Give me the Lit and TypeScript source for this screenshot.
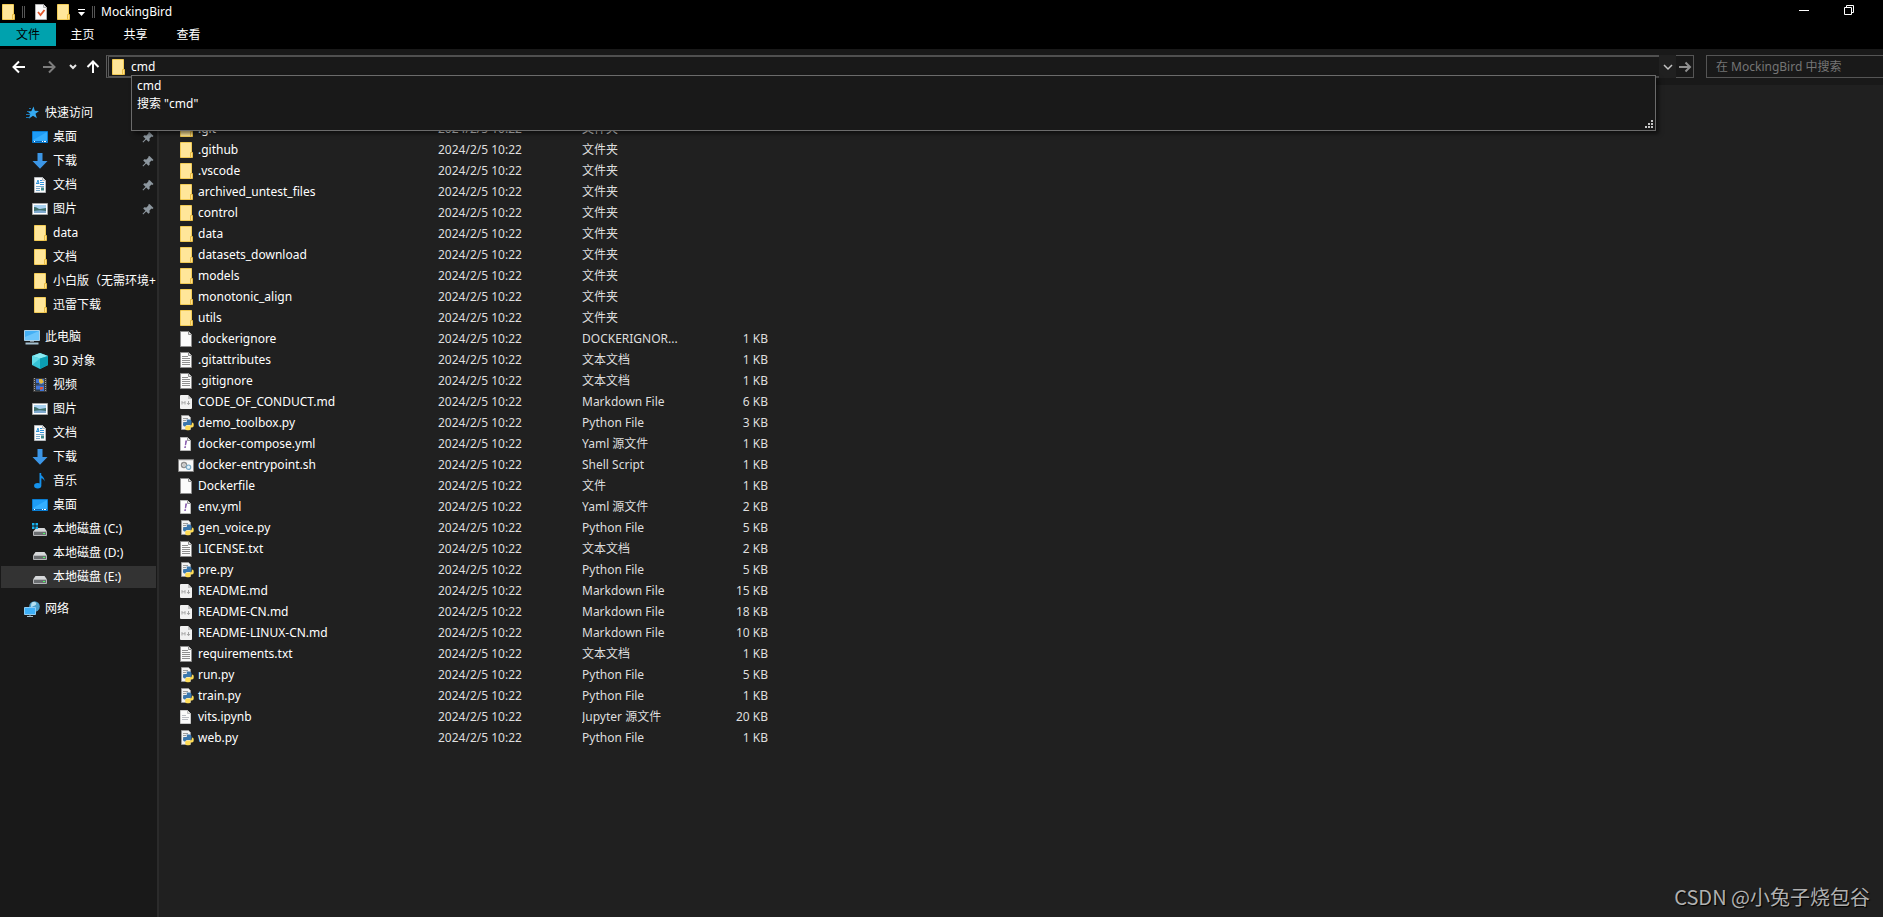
import { LitElement, html, css, svg, type TemplateResult } from "lit";
import { customElement, property } from "lit/decorators.js";

const page = (stroke = "#8e8e8e") => svg`
  <path d="M2.5 .5h8l3 3v12h-11z" fill="#fbfbfb" stroke="${stroke}"/>
  <path d="M10.5 .5v3h3" fill="#e6e6e6" stroke="${stroke}"/>`;

const ICONS: Record<string, unknown> = {
  folder: svg`
    <path d="M2.5 .5h11v15h-11z" fill="#ffe699" stroke="#f2cb55"/>
    <path d="M12.5 10.5h2v5h-2z" fill="#ffe18a" stroke="#e9bd45"/>`,
  file: page(),
  text: svg`${page()}<path d="M4 4.5h6M4 6.5h8M4 8.5h8M4 10.5h8M4 12.5h8" stroke="#8f8f8f"/>`,
  notebook: svg`
    <path d="M2.5 1.5h7l3 3v10h-10z" fill="#fafafa" stroke="#c9c9c9"/>
    <path d="M9.5 1.5v3h3" fill="#ddd" stroke="#bbb"/>
    <path d="M4 6.5h4M4 8.5h7M4 10.5h6" stroke="#b9bcc2"/>`,
  markdown: svg`
    <path d="M3 1h7l4 4v9a1 1 0 0 1-1 1h-10a1 1 0 0 1-1-1v-12a1 1 0 0 1 1-1z" fill="#f1f1f1"/>
    <path d="M10 1v4h4z" fill="#c4c4c4"/>
    <path d="M4 10.5v-3l1.500 1.700 1.500-1.700v3M10.500 7v3.500M9 9l1.500 1.700 1.500-1.700" fill="none" stroke="#a3a3a3"/>`,
  yaml: svg`
    <path d="M2.500 1.500h7l3 3v10h-10z" fill="#fff" stroke="#b8b8b8"/>
    <path d="M9.500 1.500v3h3" fill="#ddd" stroke="#999"/>
    <path d="M7.300 4.500h1.900l-1.100 4.800h-1.300zM6.500 10.300h1.600l-.3 1.700h-1.600z" fill="#8b5fb0"/>`,
  python: svg`
    <path d="M3.500 .5h7l2 2v12h-9z" fill="#f2f2f2" stroke="#9a9a9a"/>
    <path d="M5 3.500h5M5 5.500h3M5 7.500h2M5 9.500h1" stroke="#9c9c9c"/>
    <path d="M8.500 4.500h3a2 2 0 0 1 2 2v2a1.500 1.500 0 0 1-1.500 1.500h-3a1.500 1.500 0 0 0-1.500 1.500h-.8a1.800 1.800 0 0 1-1.700-1.800v-1a1.800 1.800 0 0 1 1.800-1.800h2v-.8z" fill="#3b77ad"/>
    <path d="M14.200 7.500a1.800 1.800 0 0 1 1.500 1.800v1.500a1.800 1.800 0 0 1-1.800 1.800h-1.500v1.200a1.500 1.500 0 0 1-1.500 1.500h-2a1.700 1.700 0 0 1-1.700-1.700v-1.300a1.700 1.700 0 0 1 1.700-1.700h3a1.900 1.900 0 0 0 1.900-1.900z" fill="#ffdd57"/>`,
  shell: svg`
    <path d="M.5 2.500h15v12h-15z" fill="#f7f7f7" stroke="#858585"/>
    <path d="M1 3.500h14" stroke="#dcdcdc"/>
    <circle cx="6" cy="8" r="2.500" fill="none" stroke="#8d8d8d" stroke-width="1.400"/>
    <circle cx="6" cy="8" r=".7" fill="#777"/>
    <circle cx="10.500" cy="10.200" r="2.200" fill="#e2f2fb" stroke="#78a9c8" stroke-width="1.200"/>`,
  star: svg`
    <path d="M9.500 1.500l1.300 4.300 4.200.2-3.500 2.700 1.400 4.600-3.900-2.600-4.200 3 1.500-4.800-3-2.700h4z" fill="#35a9f0"/>
    <path d="M5 3.500h2M3 6.500h2M2 9.500h4M2 12.500h3" stroke="#1979b8"/>`,
  desktop: svg`
    <path d="M.5 2.500h15v11h-15z" fill="#1e9cf7" stroke="#0a7dd2"/>
    <path d="M1 12v-1l14-8v9z" fill="#34aeff"/>
    <path d="M1 12.500h14" stroke="#0c68b8"/>
    <path d="M2 12.500h1M10 12.500h1M12 12.500h2" stroke="#fff"/>`,
  download: svg`<path d="M5.500 0h5v8h5l-7.500 7.700-7.500-7.700h5z" fill="#3c96e6"/>`,
  document: svg`
    ${page("#b4b8bc")}
    <path d="M4 6.500h3M8 3.500h2M8 5.500h4M8 7.500h4" stroke="#2f93d8"/>
    <path d="M4.500 7l1.500-4 1 4" fill="none" stroke="#2f93d8"/>
    <path d="M4 9.500h8M4 11.500h4M4 13.500h4" stroke="#77a8cc"/>
    <path d="M9 10.500h3v3h-3z" fill="#3f8b8e"/>`,
  picture: svg`
    <path d="M.5 2.500h15v11h-15z" fill="#fff" stroke="#a2a2a2"/>
    <path d="M2 4h12v8h-12z" fill="#a8d1f0"/>
    <path d="M2 6c3 0 4 2 6 2s4-1 6-1v5h-12z" fill="#3d6f6b"/>
    <path d="M2 10c4-1 8-1 12 0v2h-12z" fill="#7fa9cf"/>`,
  computer: svg`
    <path d="M.5 1.500h15v10h-15z" fill="#45b0f5" stroke="#a9cfe8"/>
    <path d="M1 11v-3l14-6v9z" fill="#6cc5fb"/>
    <path d="M6 12.500h4" stroke="#7f8b93"/>
    <path d="M1.500 14.500h13" stroke="#a7c2d2" stroke-width="2"/>`,
  cube: svg`
    <path d="M8 0l8 3v9l-8 4-8-4v-9z" fill="#35c3d6"/>
    <path d="M8 0l8 3-8 2.500-8-2.500z" fill="#8aeaf2"/>
    <path d="M8 5.500l8-2.500v9l-8 4z" fill="#0b9db3"/>
    <path d="M0 3l8 2.500-8 6.500z" fill="#62dbe8"/>`,
  video: svg`
    <path d="M1 1h14v14h-14z" fill="#3b3b3b"/>
    <path d="M2.500 1v14M13.500 1v14" stroke="#a3a3a3" stroke-dasharray="1 1"/>
    <path d="M4 2h8v5.500h-8zM4 8.500h8v5.500h-8z" fill="#3f74d8"/>
    <path d="M7 2h3l2 3-3 2-2-2z" fill="#e5b93d"/>
    <path d="M8 10h3v2l-3 1z" fill="#d9563e"/>
    <path d="M4 6h3v1.500h-3zM4 12.500h4v1.500h-4z" fill="#2a3f52"/>`,
  music: svg`
    <path d="M8 0c.5 3 5 3.500 4.500 8.500-.5-2-1.500-3-3.300-3.200v7.200z" fill="#1592ec"/>
    <path d="M7.500 0h1.700v12.500h-1.700z" fill="#1592ec"/>
    <ellipse cx="5.700" cy="12.800" rx="3.600" ry="2.700" fill="#1592ec"/>`,
  drive: svg`
    <path d="M3.500 7h9l2.500 3.500h-14z" fill="#d6d8da"/>
    <path d="M1.500 10.500h13v4h-13z" fill="#6a6d70" stroke="#b4b6b8"/>
    <path d="M11 12.500h2" stroke="#4dff63"/>`,
  system: svg`
    <path d="M4.500 7h8l2.500 3.500h-14z" fill="#d6d8da"/>
    <path d="M1.500 10.500h13v4h-13z" fill="#6a6d70" stroke="#b4b6b8"/>
    <path d="M11 12.500h2" stroke="#4dff63"/>
    <path d="M0 2h2.500v2.500h-2.500zM3.500 2h2.500v2.500h-2.500zM0 5.500h2.500v2.500h-2.500zM3.500 5.500h2.500v2.500h-2.500z" fill="#18b3f2"/>`,
  network: svg`
    <circle cx="10.500" cy="5.500" r="5.300" fill="#4c9fc9"/>
    <path d="M8 1.500c3-1 5 0 4 2s-4 1-4 3-2-2 0-5z" fill="#b5dff0"/>
    <path d="M.5 6.500h11v7h-11z" fill="#3eb0f8" stroke="#8fcdf5"/>
    <path d="M3 15.500h6" stroke="#a7c2d2"/><path d="M6 13.500v2" stroke="#8fa8b5"/>`,
  pin: svg`<path d="M9.500 3l4 4-1.200.9-.8-.3-2 2 .2 2.200-1.200 1-2.300-2.300-3 2.900-.7-.7 3-3-2.300-2.200 1-1.200 2.200.2 2-2-.3-.8z" fill="#8d979f"/>`,
  checked: svg`${page("#b0b0b0")}<path d="M5 8l2.500 3 4-5" fill="none" stroke="#e2572b" stroke-width="1.800"/>`,
  overflow: svg`<path d="M4 5.500h7" stroke="#fff"/><path d="M4 8h7l-3.500 4z" fill="#fff"/>`,
  back: svg`<path d="M14 8h-11M8 2.500l-5.500 5.500 5.500 5.500" fill="none" stroke="#fff" stroke-width="2"/>`,
  forward: svg`<path d="M2 8h11M8 2.500l5.500 5.500-5.500 5.500" fill="none" stroke="#7d7d7d" stroke-width="2"/>`,
  recent: svg`<path d="M5 6l3 3 3-3" fill="none" stroke="#e8e8e8" stroke-width="2"/>`,
  up: svg`<path d="M8 14v-11M2.500 8l5.500-5.500 5.500 5.500" fill="none" stroke="#fff" stroke-width="2"/>`,
  chevron: svg`<path d="M4 6l4 4 4-4" fill="none" stroke="#c4c4c4" stroke-width="1.500"/>`,
  go: svg`<path d="M2 8h11M8.500 3.500l4.500 4.500-4.500 4.500" fill="none" stroke="#8f8f8f" stroke-width="2"/>`,
  minimize: svg`<path d="M3 8.500h10" stroke="#fff"/>`,
  restore: svg`<path d="M3.500 5.500h7v7h-7zM5.500 5.500v-2h7v7h-2" fill="none" stroke="#fff"/>`,
  grip: svg`<path d="M13 7h2v2h-2zM10 10h2v2h-2zM13 10h2v2h-2zM7 13h2v2h-2zM10 13h2v2h-2zM13 13h2v2h-2z" fill="#c6c6c6"/>`,
};

@customElement("shell-icon")
class ShellIcon extends LitElement {
  @property() name = "file";
  static styles = css`
    :host { display: block; flex: none; width: 16px; height: 16px; }
    svg { display: block; }
  `;
  render() {
    return html`<svg width="16" height="16" viewBox="0 0 16 16" aria-hidden="true">${ICONS[this.name]}</svg>`;
  }
}

interface NavItem { label: string; icon: string; pinned?: boolean; selected?: boolean; }
interface NavGroup { label: string; icon: string; items: NavItem[]; }

const GROUPS: NavGroup[] = [
  {
    label: "快速访问", icon: "star", items: [
      { label: "桌面", icon: "desktop", pinned: true },
      { label: "下载", icon: "download", pinned: true },
      { label: "文档", icon: "document", pinned: true },
      { label: "图片", icon: "picture", pinned: true },
      { label: "data", icon: "folder" },
      { label: "文档", icon: "folder" },
      { label: "小白版（无需环境+", icon: "folder" },
      { label: "迅雷下载", icon: "folder" },
    ],
  },
  {
    label: "此电脑", icon: "computer", items: [
      { label: "3D 对象", icon: "cube" },
      { label: "视频", icon: "video" },
      { label: "图片", icon: "picture" },
      { label: "文档", icon: "document" },
      { label: "下载", icon: "download" },
      { label: "音乐", icon: "music" },
      { label: "桌面", icon: "desktop" },
      { label: "本地磁盘 (C:)", icon: "system" },
      { label: "本地磁盘 (D:)", icon: "drive" },
      { label: "本地磁盘 (E:)", icon: "drive", selected: true },
    ],
  },
  { label: "网络", icon: "network", items: [] },
];

const DATE = "2024/2/5 10:22";
const TYPES: Record<string, string> = {
  folder: "文件夹", text: "文本文档", markdown: "Markdown File", python: "Python File",
  yaml: "Yaml 源文件", shell: "Shell Script", file: "文件", notebook: "Jupyter 源文件",
};

const FILES: [name: string, icon: string, size?: number, type?: string][] = [
  [".git", "folder"], [".github", "folder"], [".vscode", "folder"],
  ["archived_untest_files", "folder"], ["control", "folder"], ["data", "folder"],
  ["datasets_download", "folder"], ["models", "folder"], ["monotonic_align", "folder"],
  ["utils", "folder"],
  [".dockerignore", "file", 1, "DOCKERIGNOR..."],
  [".gitattributes", "text", 1], [".gitignore", "text", 1],
  ["CODE_OF_CONDUCT.md", "markdown", 6], ["demo_toolbox.py", "python", 3],
  ["docker-compose.yml", "yaml", 1], ["docker-entrypoint.sh", "shell", 1],
  ["Dockerfile", "file", 1], ["env.yml", "yaml", 2], ["gen_voice.py", "python", 5],
  ["LICENSE.txt", "text", 2], ["pre.py", "python", 5], ["README.md", "markdown", 15],
  ["README-CN.md", "markdown", 18], ["README-LINUX-CN.md", "markdown", 10],
  ["requirements.txt", "text", 1], ["run.py", "python", 5], ["train.py", "python", 1],
  ["vits.ipynb", "notebook", 20], ["web.py", "python", 1],
];

@customElement("nav-pane")
class NavPane extends LitElement {
  static styles = css`
    :host { display: block; box-sizing: border-box; padding-top: 16px; background: #191919; border-right: 2px solid #2b2b2b; overflow: hidden; }
    ul { list-style: none; margin: 0; padding: 0; }
    li { display: flow-root; }
    .groups { display: flex; flex-direction: column; gap: 8px; }
    .item { display: flex; align-items: center; gap: 5px; height: 22px; margin: 1px; padding-left: 31px; color: #fff; text-decoration: none; white-space: nowrap; }
    .group > .item { padding-left: 23px; }
    ul .item { margin: 1px; }
    .selected { background: #333; }
    .label { flex: 1; min-width: 0; overflow: hidden; }
  `;
  private item(item: NavItem): TemplateResult {
    return html`<a class="item ${item.selected ? "selected" : ""}" href="#">
      <shell-icon name=${item.icon}></shell-icon><span class="label">${item.label}</span>
      ${item.pinned ? html`<shell-icon name="pin"></shell-icon>` : ""}
    </a>`;
  }
  render() {
    return html`<nav><ul class="groups">${GROUPS.map((g) => html`<li class="group">
      ${this.item(g)}
      ${g.items.length ? html`<ul>${g.items.map((i) => html`<li>${this.item(i)}</li>`)}</ul>` : ""}
    </li>`)}</ul></nav>`;
  }
}

@customElement("file-list")
class FileList extends LitElement {
  static styles = css`
    :host { display: block; padding: 33px 0 0 19px; }
    table { width: 590px; table-layout: fixed; border-collapse: collapse; }
    .name { width: 260px; }
    .date { width: 144px; }
    .type { width: 104px; }
    td { height: 21px; padding: 0; color: #dedede; white-space: nowrap; overflow: hidden; }
    .entry { display: flex; align-items: center; gap: 4px; color: #fff; }
    .size { text-align: right; }
  `;
  render() {
    return html`<table aria-label="MockingBird">
      <colgroup><col class="name"><col class="date"><col class="type"><col></colgroup>
      <tbody>${FILES.map(([name, icon, size, type]) => html`<tr>
        <td><span class="entry"><shell-icon name=${icon}></shell-icon>${name}</span></td>
        <td>${DATE}</td>
        <td>${type ?? TYPES[icon]}</td>
        <td class="size">${size ? `${size} KB` : ""}</td>
      </tr>`)}</tbody>
    </table>`;
  }
}

@customElement("app-root")
class AppRoot extends LitElement {
  static styles = css`
    :host {
      display: flex; flex-direction: column; position: relative; box-sizing: border-box; min-height: 100vh;
      overflow: hidden; background: #202020; color: #fff;
      font: 12px/18px "Noto Sans", "Noto Sans CJK SC", sans-serif;
    }
    button, input { font: inherit; color: inherit; background: none; border: 0; padding: 0; margin: 0; outline: none; border-radius: 0; }
    button { display: flex; align-items: center; justify-content: center; }
    .chrome { background: #000; height: 49px; }
    .title { display: flex; align-items: center; height: 23px; }
    .bar { flex: none; width: 1px; height: 12px; margin: 0 6px; border: solid #555; border-width: 0 1px; }
    .quick { display: flex; gap: 6px; margin-left: 2px; }
    .more { margin: 0 -4px 0 -3px; }
    .name { font: inherit; margin: 0; }
    .window { display: flex; gap: 29px; margin: -4px 26px 0 auto; }
    .tabs { display: flex; height: 23px; }
    .tabs button { width: 53px; }
    .tabs .file { width: 56px; background: #00a2ae; color: #000; }
    .address { display: flex; align-items: flex-start; height: 36px; box-sizing: border-box; padding-top: 6px; background: #191919; }
    .nav { display: flex; align-items: center; height: 23px; padding: 0 5px 0 11px; }
    .nav button { width: 16px; height: 23px; }
    .forward { margin-left: 14px; }
    .recent { margin-left: 8px; }
    .up { margin-left: 4px; }
    .path { position: relative; flex: 1; display: flex; align-items: center; gap: 5px; height: 23px; box-sizing: border-box; padding-left: 1px; border: 2px solid #505050; border-left: 3px double #5c5c5c; border-right: 0; }
    .path input { flex: 1; min-width: 0; height: 17px; }
    .drop { width: 17px; height: 23px; background: #202020; }
    .go { box-sizing: border-box; width: 18px; height: 23px; border: solid #555; border-width: 1px 1px 1px 0; }
    .search { display: flex; align-items: center; box-sizing: border-box; width: 177px; height: 23px; margin-left: 12px; border: 1px solid #555; border-right: 0; padding-left: 9px; }
    .search input { width: 100%; }
    .search input::placeholder { color: #757575; opacity: 1; }
    .suggest { position: absolute; z-index: 2; left: 22px; right: 3px; top: 18px; box-sizing: border-box; height: 56px; margin: 0; padding: 1px 5px; list-style: none; background: #191919; border: 1px solid #6b6b6b; box-shadow: 3px 3px 4px rgba(0, 0, 0, 0.5); }
    .grip { position: absolute; right: 1px; bottom: 1px; }
    .body { flex: 1; display: grid; grid-template-columns: 159px 1fr; }
    .mark { position: absolute; right: 13px; bottom: 5px; font: 20px/30px "Noto Sans CJK SC", sans-serif; color: #b0b0b0; text-shadow: 1px 1px 1px #000; }
  `;
  render() {
    return html`
      <header class="chrome">
        <div class="title">
          <shell-icon name="folder"></shell-icon>
          <span class="bar"></span>
          <div class="quick">
            <button aria-label="属性"><shell-icon name="checked"></shell-icon></button>
            <button aria-label="新建文件夹"><shell-icon name="folder"></shell-icon></button>
            <button class="more" aria-label="自定义"><shell-icon name="overflow"></shell-icon></button>
          </div>
          <span class="bar"></span>
          <h1 class="name">MockingBird</h1>
          <div class="window">
            <button aria-label="最小化"><shell-icon name="minimize"></shell-icon></button>
            <button aria-label="还原"><shell-icon name="restore"></shell-icon></button>
          </div>
        </div>
        <div class="tabs">
          <button class="file">文件</button><button>主页</button><button>共享</button><button>查看</button>
        </div>
      </header>
      <div class="address">
        <div class="nav">
          <button aria-label="后退"><shell-icon name="back"></shell-icon></button>
          <button class="forward" aria-label="前进"><shell-icon name="forward"></shell-icon></button>
          <button class="recent" aria-label="最近"><shell-icon name="recent"></shell-icon></button>
          <button class="up" aria-label="上移"><shell-icon name="up"></shell-icon></button>
        </div>
        <div class="path">
          <shell-icon name="folder"></shell-icon>
          <input aria-label="地址" .value=${"cmd"}>
          <ul class="suggest">
            <li>cmd</li>
            <li>搜索 "cmd"</li>
            <li class="grip" role="presentation"><shell-icon name="grip"></shell-icon></li>
          </ul>
        </div>
        <button class="drop" aria-label="历史"><shell-icon name="chevron"></shell-icon></button>
        <button class="go" aria-label="转到"><shell-icon name="go"></shell-icon></button>
        <label class="search"><input aria-label="搜索" placeholder="在 MockingBird 中搜索"></label>
      </div>
      <div class="body"><nav-pane></nav-pane><file-list></file-list></div>
      <div class="mark">CSDN @小兔子烧包谷</div>
    `;
  }
}
